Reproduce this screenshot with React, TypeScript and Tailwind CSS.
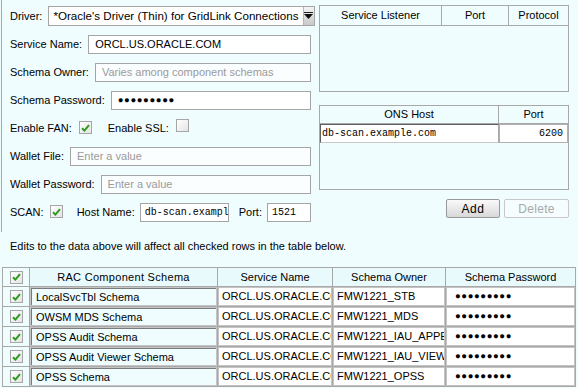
import React from "react";

const sans = "font-['Liberation_Sans',Arial,sans-serif]";
const mono = "font-['Liberation_Mono','Courier_New',monospace]";
const DOTS = "●●●●●●●●●";

function Check({ checked = true }: { checked?: boolean }) {
	return (
		<span className="inline-flex w-[13px] h-[13px] shrink-0 items-center justify-center border border-[#a6a6a6] bg-gradient-to-br from-white to-[#e4e4e4]">
			{checked && (
				<svg width="9" height="8" viewBox="0 0 9 8">
					<path
						d="M1 4.2 L3.4 6.6 L8 1.2"
						fill="none"
						stroke="#2e9a1e"
						strokeWidth="2"
					/>
				</svg>
			)}
		</span>
	);
}

function Dots() {
	return <span className="text-[9.5px] tracking-[0.6px]">{DOTS}</span>;
}

function Field({
	value,
	placeholder,
	className = "",
	monoText = false,
	children,
}: {
	value?: string;
	placeholder?: string;
	className?: string;
	monoText?: boolean;
	children?: React.ReactNode;
}) {
	return (
		<div
			className={`h-[19px] flex items-center px-[6px] border border-[#a5a5a5] overflow-hidden whitespace-nowrap ${
				placeholder ? "bg-[#fbfeff]" : "bg-white"
			} ${className}`}
		>
			{children ??
				(value ? (
					<span className={monoText ? `${mono} text-[10px]` : ""}>{value}</span>
				) : (
					<span className="text-[#9a9a9a]">{placeholder}</span>
				))}
		</div>
	);
}

function Row({ label, children }: { label: string; children: React.ReactNode }) {
	return (
		<div className="h-[28px] flex items-center gap-[6px]">
			<span className="whitespace-nowrap">{label}</span>
			{children}
		</div>
	);
}

const components = [
	{ name: "LocalSvcTbl Schema", owner: "FMW1221_STB" },
	{ name: "OWSM MDS Schema", owner: "FMW1221_MDS" },
	{ name: "OPSS Audit Schema", owner: "FMW1221_IAU_APPEND" },
	{ name: "OPSS Audit Viewer Schema", owner: "FMW1221_IAU_VIEWER" },
	{ name: "OPSS Schema", owner: "FMW1221_OPSS" },
];

// widths of the bottom grid columns
const cols = ["w-[27px]", "w-[188px]", "w-[115px]", "w-[113px]", "w-[130px]"];

export default function App() {
	return (
		<div
			className={`w-[578px] h-[388px] overflow-hidden bg-[#effdff] text-[11px] text-black ${sans}`}
		>
			{/* Top form */}
			<div className="flex h-[232px]">
				<div className="ml-[1px] w-[310px] border-l border-[#a8a8a8] pl-[8px] pt-[2px]">
					<Row label="Driver:">
						<div className="flex-1 h-[20px] flex bg-white border border-[#a5a5a5]">
							<div className="flex-1 px-[4px] flex items-center overflow-hidden whitespace-nowrap text-[11.6px]">
								*Oracle's Driver (Thin) for GridLink Connections
							</div>
							<div className="w-[11px] flex items-center justify-center bg-gradient-to-b from-[#f4f4f4] to-[#c8c8c8] border-l border-[#b5b5b5]">
								<svg width="9" height="8" viewBox="0 0 9 8">
									<rect x="0" y="0" width="9" height="1" fill="#222" />
									<path d="M0 2 L9 2 L4.5 7 Z" fill="#111" />
								</svg>
							</div>
						</div>
					</Row>
					<Row label="Service Name:">
						<Field value="ORCL.US.ORACLE.COM" className="flex-1" />
					</Row>
					<Row label="Schema Owner:">
						<Field placeholder="Varies among component schemas" className="flex-1" />
					</Row>
					<Row label="Schema Password:">
						<Field className="flex-1">
							<Dots />
						</Field>
					</Row>
					<div className="h-[28px] flex items-center">
						<span>Enable FAN:</span>
						<span className="ml-[7px]">
							<Check />
						</span>
						<span className="ml-[16px]">Enable SSL:</span>
						<span className="ml-[7px]">
							<Check checked={false} />
						</span>
					</div>
					<Row label="Wallet File:">
						<Field placeholder="Enter a value" className="flex-1" />
					</Row>
					<Row label="Wallet Password:">
						<Field placeholder="Enter a value" className="flex-1" />
					</Row>
					<div className="h-[28px] flex items-center">
						<span>SCAN:</span>
						<span className="ml-[6px]">
							<Check />
						</span>
						<span className="ml-[14px]">Host Name:</span>
						<Field
							value="db-scan.example.com"
							monoText
							className="ml-[5px] w-[89px] !px-[4px]"
						/>
						<span className="ml-[10px]">Port:</span>
						<Field value="1521" monoText className="ml-[5px] w-[44px] !px-[4px]" />
					</div>
				</div>

				{/* Right column */}
				<div className="ml-[8px] w-[250px] pt-[5px]">
					<div className="h-[87px] border border-[#a8a8a8] bg-[#effdff]">
						<div className="flex h-[20px] border-b border-[#a8a8a8]">
							<div className="w-[122px] flex items-center justify-center border-r border-[#a8a8a8]">
								Service Listener
							</div>
							<div className="w-[67px] flex items-center justify-center border-r border-[#a8a8a8]">
								Port
							</div>
							<div className="flex-1 flex items-center justify-center">Protocol</div>
						</div>
					</div>

					<div className="mt-[13px] h-[85px] border border-[#a8a8a8]">
						<div className="flex h-[18px] border-b border-[#a8a8a8]">
							<div className="w-[179px] flex items-center justify-center border-r border-[#a8a8a8]">
								ONS Host
							</div>
							<div className="flex-1 flex items-center justify-center">Port</div>
						</div>
						<div className={`flex h-[19px] text-[10px] ${mono}`}>
							<div className="w-[179px] bg-white border-t border-l border-[#606060] border-b border-b-[#c8c8c8] border-r border-r-[#a8a8a8] flex items-center px-[1px]">
								db-scan.example.com
							</div>
							<div className="flex-1 bg-white border border-[#b0b0b0] flex items-center justify-end pr-[4px]">
								6200
							</div>
						</div>
					</div>

					<div className="mt-[9px] flex justify-end gap-[4px]">
						<button className="w-[54px] h-[19px] rounded-[2px] border border-[#9a9a9a] bg-gradient-to-b from-[#fafafa] to-[#d8d8d8] text-[12px] tracking-[0.5px]">
							Add
						</button>
						<button className="w-[65px] h-[19px] rounded-[2px] border border-[#c8c8c8] bg-[#f6fdfe] text-[#a8a8a8] text-[12px] tracking-[0.3px]">
							Delete
						</button>
					</div>
				</div>
			</div>

			<div className="pl-[10px] h-[30px] leading-[30px] -mt-[1px]">
				Edits to the data above will affect all checked rows in the table below.
			</div>

			{/* Bottom grid */}
			<div className="ml-[2px] mt-[6px] w-[574px] border-t border-l border-[#a8a8a8]">
				<div className="flex h-[19px] border-b border-[#a8a8a8]">
					<div className={`${cols[0]} flex items-center justify-center border-r border-[#a8a8a8]`}>
						<Check />
					</div>
					<div className={`${cols[1]} flex items-center justify-center bg-[#e9fafd] border-r border-[#a8a8a8] tracking-[0.3px]`}>
						RAC Component Schema
					</div>
					<div className={`${cols[2]} flex items-center justify-center bg-[#e9fafd] border-r border-[#a8a8a8]`}>
						Service Name
					</div>
					<div className={`${cols[3]} flex items-center justify-center bg-[#e9fafd] border-r border-[#a8a8a8]`}>
						Schema Owner
					</div>
					<div className={`${cols[4]} flex items-center justify-center bg-[#e9fafd] border-r border-[#a8a8a8]`}>
						Schema Password
					</div>
				</div>
				{components.map((c) => (
					<div key={c.name} className="flex h-[20px] border-b border-[#a8a8a8]">
						<div className={`${cols[0]} flex items-center justify-center border-r border-[#a8a8a8]`}>
							<Check />
						</div>
						<div className={`${cols[1]} p-[1px] border-r border-[#a8a8a8] bg-[#c4c4c4]`}>
							<div className="h-full border-t border-l border-[#7c7c7c] bg-[#effdff] flex items-center pl-[4px] whitespace-nowrap overflow-hidden">
								{c.name}
							</div>
						</div>
						<div className={`${cols[2]} p-[1px] border-r border-[#a8a8a8] bg-[#c4c4c4]`}>
							<div className="h-full bg-white flex items-center pl-[3px] whitespace-nowrap overflow-hidden">
								ORCL.US.ORACLE.COM
							</div>
						</div>
						<div className={`${cols[3]} p-[1px] border-r border-[#a8a8a8] bg-[#c4c4c4]`}>
							<div className="h-full bg-white flex items-center pl-[3px] whitespace-nowrap overflow-hidden">
								{c.owner}
							</div>
						</div>
						<div className={`${cols[4]} p-[1px] border-r border-[#a8a8a8] bg-[#c4c4c4]`}>
							<div className="h-full bg-white flex items-center pl-[8px] whitespace-nowrap overflow-hidden">
								<Dots />
							</div>
						</div>
					</div>
				))}
			</div>
		</div>
	);
}
